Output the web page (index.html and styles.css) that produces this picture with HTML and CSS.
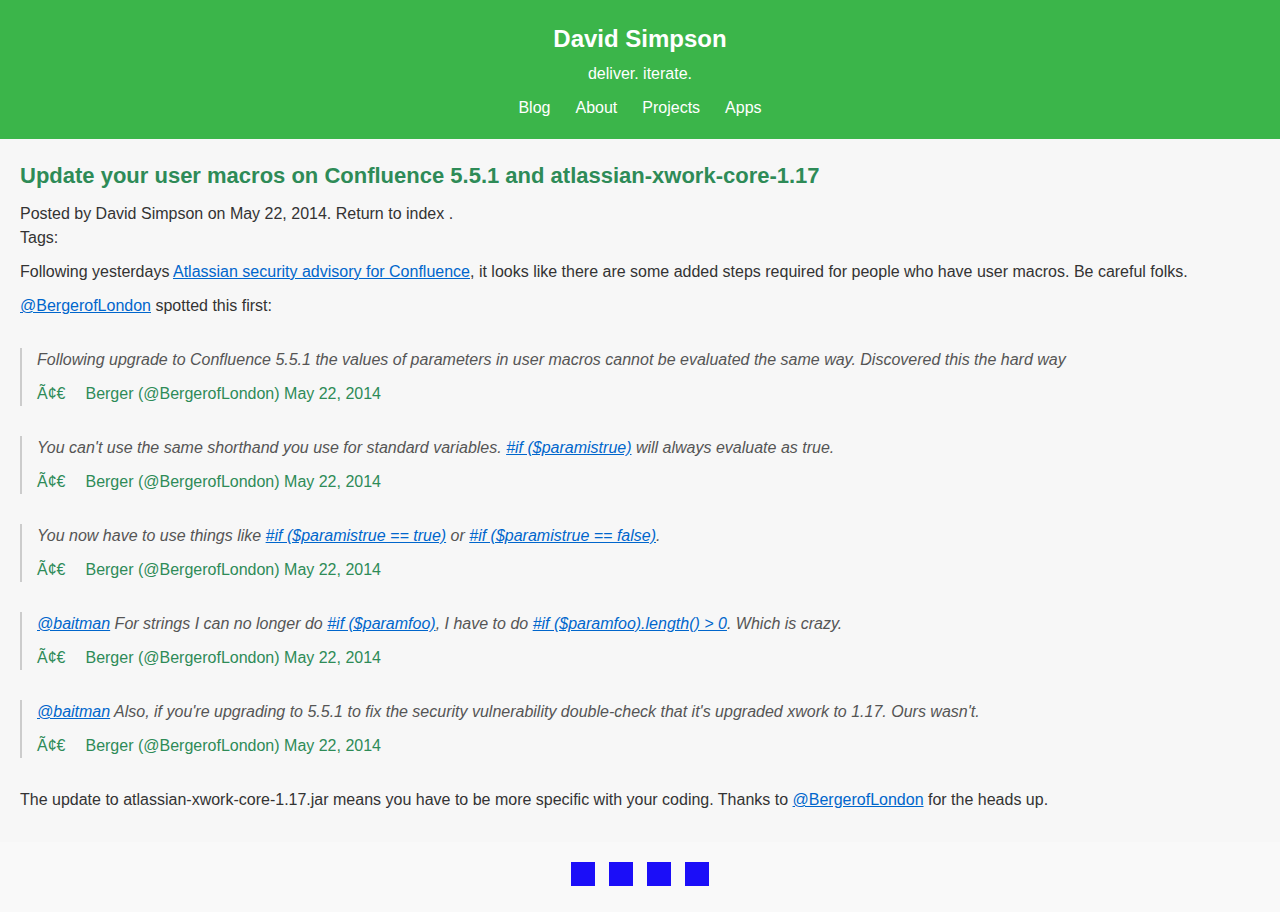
FILE: index.html
```html
<!DOCTYPE html>
<html lang="en">
<head>
<meta charset="utf-8">
<meta name="viewport" content="width=device-width, initial-scale=1">
<title>Update your user macros on Confluence 5.5.1 - David Simpson</title>
<link rel="stylesheet" href="styles.css">
</head>
<body>
<header class="site-header">
  <h1 class="site-title">David Simpson</h1>
  <p class="tagline">deliver. iterate.</p>
  <nav class="site-nav">
    <a href="#blog">Blog</a>
    <a href="#about">About</a>
    <a href="#projects">Projects</a>
    <a href="#apps">Apps</a>
  </nav>
</header>
<main class="post">
  <h2 class="post-title">Update your user macros on Confluence 5.5.1 and atlassian-xwork-core-1.17</h2>
  <p class="text">Posted by David Simpson on May 22, 2014. <a class="plain" href="#index">Return to index</a> .<br>Tags:</p>
  <p class="text">Following yesterdays <a href="#advisory">Atlassian security advisory for Confluence</a>, it looks like there are some added steps required for people who have user macros. Be careful folks.</p>
  <p class="text"><a href="#berger">@BergerofLondon</a> spotted this first:</p>
  <blockquote class="quote">
    <p class="text">Following upgrade to Confluence 5.5.1 the values of parameters in user macros cannot be evaluated the same way. Discovered this the hard way</p>
    <footer class="source"><span class="mark">Ã¢€</span><span>Berger (@BergerofLondon) <a class="plain" href="#tweet1">May 22, 2014</a></span></footer>
  </blockquote>
  <blockquote class="quote">
    <p class="text">You can't use the same shorthand you use for standard variables. <a href="#if">#if ($paramistrue)</a> will always evaluate as true.</p>
    <footer class="source"><span class="mark">Ã¢€</span><span>Berger (@BergerofLondon) <a class="plain" href="#tweet2">May 22, 2014</a></span></footer>
  </blockquote>
  <blockquote class="quote">
    <p class="text">You now have to use things like <a href="#if">#if ($paramistrue == true)</a> or <a href="#if">#if ($paramistrue == false)</a>.</p>
    <footer class="source"><span class="mark">Ã¢€</span><span>Berger (@BergerofLondon) <a class="plain" href="#tweet3">May 22, 2014</a></span></footer>
  </blockquote>
  <blockquote class="quote">
    <p class="text"><a href="#baitman">@baitman</a> For strings I can no longer do <a href="#if">#if ($paramfoo)</a>, I have to do <a href="#if">#if ($paramfoo).length() &gt; 0</a>. Which is crazy.</p>
    <footer class="source"><span class="mark">Ã¢€</span><span>Berger (@BergerofLondon) <a class="plain" href="#tweet4">May 22, 2014</a></span></footer>
  </blockquote>
  <blockquote class="quote">
    <p class="text"><a href="#baitman">@baitman</a> Also, if you're upgrading to 5.5.1 to fix the security vulnerability double-check that it's upgraded xwork to 1.17. Ours wasn't.</p>
    <footer class="source"><span class="mark">Ã¢€</span><span>Berger (@BergerofLondon) <a class="plain" href="#tweet5">May 22, 2014</a></span></footer>
  </blockquote>
  <p class="text">The update to atlassian-xwork-core-1.17.jar means you have to be more specific with your coding. Thanks to <a href="#berger">@BergerofLondon</a> for the heads up.</p>
</main>
<footer class="site-footer">
  <a class="social" href="#twitter" aria-label="Twitter"></a>
  <a class="social" href="#github" aria-label="GitHub"></a>
  <a class="social" href="#linkedin" aria-label="LinkedIn"></a>
  <a class="social" href="#rss" aria-label="RSS"></a>
</footer>
</body>
</html>
```
FILE: styles.css
```css
body {
  margin: 0;
  background: #f9f9f9;
  color: #333;
  font: 16px/24px "Liberation Sans", Arial, sans-serif;
}

.site-header {
  padding: 21px 20px 19px;
  background: #3bb54a;
  color: #fff;
  text-align: center;
}

.site-title {
  margin: 0;
  font-size: 24px;
  line-height: 36px;
}

.tagline {
  margin: 5px 0 10px;
}

.site-nav {
  display: flex;
  justify-content: center;
  gap: 25px;
}

.site-nav a {
  color: inherit;
  text-decoration: none;
}

.post {
  padding: 20px;
  background: #f7f7f7;
}

.post-title {
  margin: 0 0 10px;
  color: #2e8b57;
  font-size: 22px;
  line-height: 33px;
}

.text {
  margin: 0 0 10px;
}

a {
  color: #0066cc;
}

.plain {
  color: inherit;
  text-decoration: none;
}

.quote {
  margin: 30px 0;
  padding-left: 15px;
  border-left: 2px solid #ccc;
  color: #555;
}

.quote .text {
  font-style: italic;
}

.source {
  display: flex;
  gap: 20px;
  color: #2e8b57;
}

.site-footer {
  display: flex;
  justify-content: center;
  gap: 14px;
  padding: 20px 20px 26px;
}

.social {
  width: 24px;
  height: 24px;
  background: #1b0ef8;
}
```
